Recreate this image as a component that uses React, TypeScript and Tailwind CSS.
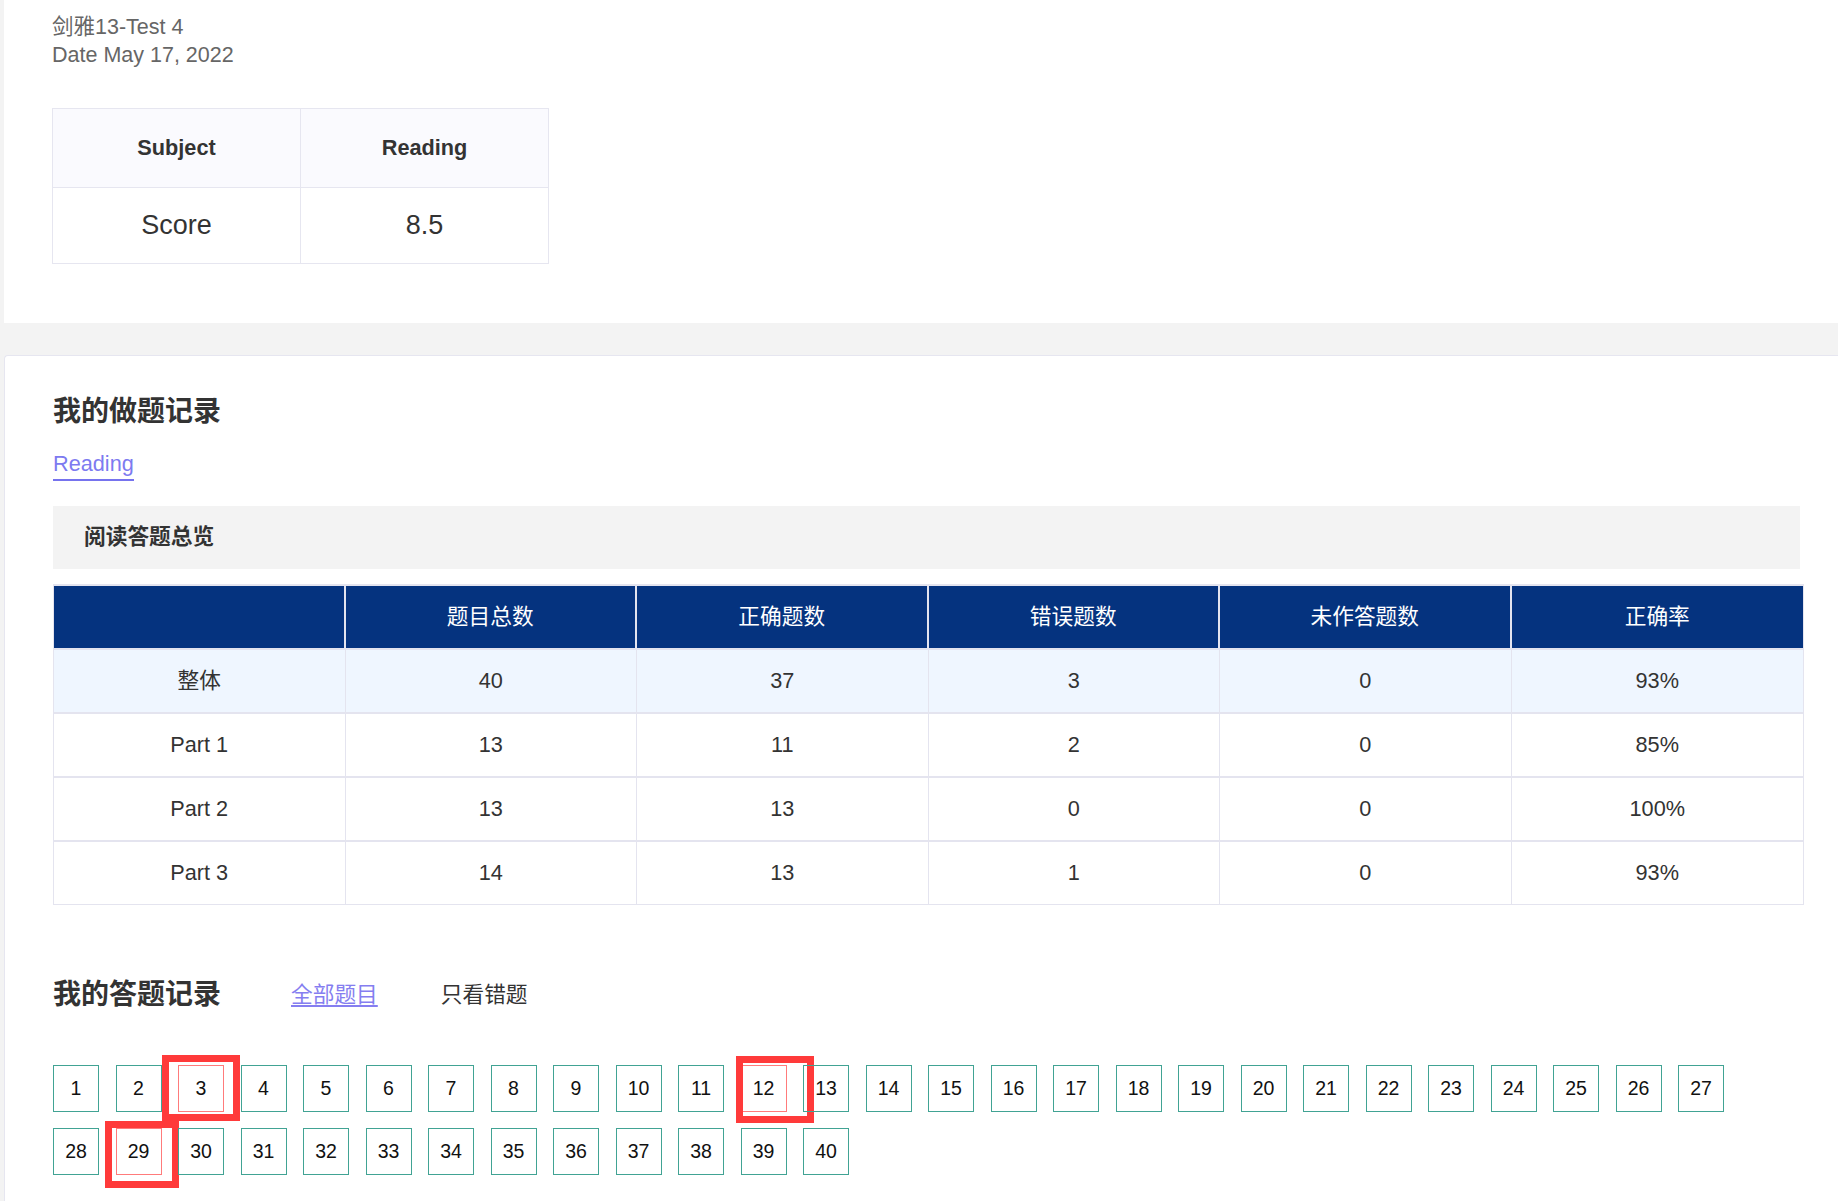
import React from "react";

type PartRow = {
  name: string;
  total: number;
  right: number;
  wrong: number;
  blank: number;
  rate: string;
};

const rows: PartRow[] = [
  { name: "整体", total: 40, right: 37, wrong: 3, blank: 0, rate: "93%" },
  { name: "Part 1", total: 13, right: 11, wrong: 2, blank: 0, rate: "85%" },
  { name: "Part 2", total: 13, right: 13, wrong: 0, blank: 0, rate: "100%" },
  { name: "Part 3", total: 14, right: 13, wrong: 1, blank: 0, rate: "93%" },
];

const headers = ["", "题目总数", "正确题数", "错误题数", "未作答题数", "正确率"];

// wrong answers get a pink box and a red frame drawn over them
const frames: Record<number, string> = {
  3: "-left-[17px] -top-[11px] w-[78px] h-[66px]",
  12: "-left-[6px] -top-[10px] w-[78px] h-[67px]",
  29: "-left-[12px] -top-[8px] w-[74px] h-[67px]",
};

function QuestionBox({ n }: { n: number }) {
  const frame = frames[n];
  return (
    <div
      className={`relative w-[46px] h-[47px] flex items-center justify-center text-[19.5px] text-[#111] border ${
        frame ? "border-[#ff7b7b]" : "border-[#41a394]"
      }`}
    >
      {n}
      {frame && <div className={`absolute ${frame} border-[7px] border-[#ff3a3a]`}></div>}
    </div>
  );
}

function App() {
  const questions = Array.from({ length: 40 }, (_, i) => i + 1);

  return (
    <div
      className="min-h-[1201px] bg-[#f3f3f3] pb-[20px]"
      style={{ fontFamily: '"Liberation Sans", Arial, "Noto Sans CJK SC", sans-serif' }}
    >
      {/* top card */}
      <div className="ml-[4px] h-[323px] bg-white pl-[48px] pt-[13px]">
        <div className="text-[21.5px] leading-[28px] text-[#666]">剑雅13-Test 4</div>
        <div className="text-[21.5px] leading-[28px] text-[#666]">Date May 17, 2022</div>
        <table className="mt-[39px] w-[497px] table-fixed border-collapse text-[#333]">
          <thead>
            <tr className="h-[79px] bg-[#fafafe]">
              <th className="border border-[#e6e6f0] text-[21.7px] font-bold">Subject</th>
              <th className="border border-[#e6e6f0] text-[21.7px] font-bold">Reading</th>
            </tr>
          </thead>
          <tbody>
            <tr className="h-[76px]">
              <td className="border border-[#e6e6f0] text-center text-[27px]">Score</td>
              <td className="border border-[#e6e6f0] text-center text-[27px]">8.5</td>
            </tr>
          </tbody>
        </table>
      </div>

      {/* records card */}
      <div className="ml-[4px] mt-[32px] min-h-[846px] rounded-tl-[4px] border-l border-t border-[#e6e6f0] bg-white pl-[48px] pt-[36px] pb-[20px]">
        <h2 className="text-[28px] leading-[40px] font-bold text-[#333]">我的做题记录</h2>
        <div className="mt-[19px] inline-block border-b-2 border-[#7673ee] pb-[2px] text-[21.7px] leading-[26px] text-[#7d7af0]">
          Reading
        </div>

        <div className="mt-[25px] flex h-[63px] w-[1747px] items-center bg-[#f3f3f3] pl-[31px] text-[21.7px] font-bold text-[#333]">
          阅读答题总览
        </div>

        <table className="mt-[15px] w-[1751px] table-fixed border-separate border-spacing-0 border-x border-b border-t-2 border-[#e4e4ef] text-[21.7px]">
          <thead>
            <tr className="h-[62px] bg-[#05337f]">
              {headers.map((h, i) => (
                <th
                  key={i}
                  className={`font-normal text-white ${i < headers.length - 1 ? "border-r-2 border-[#e4e4ef]" : ""}`}
                >
                  {h}
                </th>
              ))}
            </tr>
          </thead>
          <tbody>
            {rows.map((r, idx) => {
              const cells = [r.name, r.total, r.right, r.wrong, r.blank, r.rate];
              return (
                <tr key={r.name} className={`h-[64px] ${idx === 0 ? "bg-[#eff6ff]" : "bg-white"}`}>
                  {cells.map((c, i) => (
                    <td
                      key={i}
                      className={`border-t-2 border-[#e4e4ef] text-center text-[#333] ${
                        i < cells.length - 1 ? "border-r" : ""
                      }`}
                    >
                      {c}
                    </td>
                  ))}
                </tr>
              );
            })}
          </tbody>
        </table>

        <div className="mt-[70px] flex items-center">
          <h2 className="text-[28px] leading-[40px] font-bold text-[#333]">我的答题记录</h2>
          <span className="ml-[70px] text-[21.7px] text-[#857ef0] underline underline-offset-[3px]">全部题目</span>
          <span className="ml-[63px] text-[21.7px] text-[#333]">只看错题</span>
        </div>

        <div className="mt-[50px] flex w-[1700px] flex-wrap gap-x-[16.5px] gap-y-[16px]">
          {questions.map((n) => (
            <QuestionBox key={n} n={n} />
          ))}
        </div>
      </div>
    </div>
  );
}

export default App;
